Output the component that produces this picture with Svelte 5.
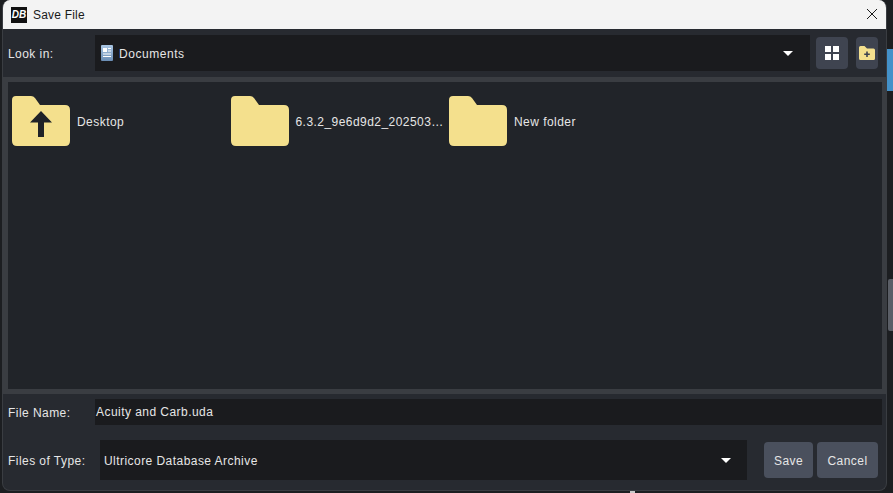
<script>
  const folders = [
    { name: 'Desktop', up: true },
    { name: '6.3.2_9e6d9d2_202503…', up: false },
    { name: 'New folder', up: false }
  ];
  const folderPath = 'M4 0H19Q21.5 0 23 2L28 9H53Q58 9 58 14V45Q58 50 53 50H5Q0 50 0 45V4Q0 0 4 0Z';
</script>

<div class="page">
  <!-- bits of the app behind the dialog -->
  <div class="bg-blue"></div>
  <div class="bg-scroll"></div>
  <div class="bg-tick"></div>

  <div class="window">
    <div class="titlebar">
      <div class="logo">DB</div>
      <span class="title">Save File</span>
      <svg class="close" width="12" height="12" viewBox="0 0 12 12">
        <path d="M1 1L11 11M11 1L1 11" stroke="#1a1a1a" stroke-width="1" fill="none" />
      </svg>
    </div>

    <div class="body">
      <div class="look-row">
        <label class="lbl look-lbl" for="look">Look in:</label>
        <div class="combo look-combo" id="look">
          <svg class="doc" width="12" height="16" viewBox="0 0 12 16">
            <defs>
              <linearGradient id="docfill" x1="0" y1="0" x2="0" y2="1">
                <stop offset="0" stop-color="#a9c6e4" />
                <stop offset="1" stop-color="#6a8db4" />
              </linearGradient>
            </defs>
            <rect width="12" height="16" rx="1" fill="url(#docfill)" />
            <rect x="2" y="3" width="4" height="4" fill="#fff" />
            <path d="M7 3.5H10M7 6H10M2 9H10M2 11.5H10" stroke="#fff" stroke-width="1" />
          </svg>
          <span>Documents</span>
          <div class="arrow"></div>
        </div>
        <button class="tool grid-btn" aria-label="View">
          <svg width="14" height="14" viewBox="0 0 14 14" fill="#fff">
            <rect x="0" y="0" width="6" height="6" />
            <rect x="8" y="0" width="6" height="6" />
            <rect x="0" y="8" width="6" height="6" />
            <rect x="8" y="8" width="6" height="6" />
          </svg>
        </button>
        <button class="tool new-btn" aria-label="New folder">
          <svg width="16" height="14" viewBox="0 0 16 14">
            <path d="M1.5 0H5.5L8 2.5H14.5Q16 2.5 16 4V12.5Q16 14 14.5 14H1.5Q0 14 0 12.5V1.5Q0 0 1.5 0Z" fill="#f4e08d" />
            <path d="M8 5.5V11M5.2 8.2H10.8" stroke="#3c4250" stroke-width="1.6" />
          </svg>
        </button>
      </div>

      <div class="list">
        {#each folders as f}
          <div class="item">
            <svg width="58" height="50" viewBox="0 0 58 50">
              <path d={folderPath} fill="#f4e08d" />
              {#if f.up}
                <path d="M29 15L40 26.5H32V41H26V26.5H18Z" fill="#1f2227" />
              {/if}
            </svg>
            <span class="item-name">{f.name}</span>
          </div>
        {/each}
      </div>

      <div class="name-row">
        <label class="lbl name-lbl" for="fname">File Name:</label>
        <div class="name-input" id="fname">Acuity and Carb.uda</div>
      </div>

      <div class="type-row">
        <label class="lbl type-lbl" for="ftype">Files of Type:</label>
        <div class="combo type-combo" id="ftype">
          <span>Ultricore Database Archive</span>
          <div class="arrow"></div>
        </div>
        <button class="btn save">Save</button>
        <button class="btn cancel">Cancel</button>
      </div>
    </div>
  </div>
</div>

<style>
  :global(body) {
    margin: 0;
    background: #1c1e21;
  }

  .page {
    position: relative;
    width: 893px;
    height: 493px;
    overflow: hidden;
    padding-left: 2px;
    box-sizing: border-box;
    font-family: "Liberation Sans", Arial, sans-serif;
    font-size: 12px;
    letter-spacing: 0.45px;
    color: #e6e6e6;
  }

  .bg-blue {
    position: absolute;
    left: 887px;
    top: 49px;
    width: 6px;
    height: 42px;
    background: #4391c9;
  }

  .bg-scroll {
    position: absolute;
    left: 888px;
    top: 279px;
    width: 5px;
    height: 52px;
    background: #5a5e66;
    border-radius: 2px 0 0 2px;
  }

  .bg-tick {
    position: absolute;
    left: 630px;
    top: 490px;
    width: 5px;
    height: 3px;
    background: #c8c8c8;
  }

  .window {
    position: relative;
    width: 885px;
    height: 491px;
    background: #272a30;
    border-radius: 8px;
    border: 1px solid #3a3d42;
    border-top: none;
    box-sizing: border-box;
    overflow: hidden;
    display: flex;
    flex-direction: column;
  }

  .titlebar {
    height: 29px;
    flex: none;
    background: #f3f3f3;
    display: flex;
    align-items: center;
    padding-left: 8px;
    color: #1a1a1a;
    letter-spacing: 0.2px;
  }

  .logo {
    width: 16px;
    height: 16px;
    background: #111;
    color: #fff;
    font-size: 10px;
    font-weight: bold;
    font-style: italic;
    letter-spacing: 0;
    text-align: center;
    line-height: 15px;
    margin-right: 6px;
  }

  .close {
    margin-left: auto;
    margin-right: 8px;
    margin-bottom: 2px;
  }

  .body {
    flex: 1;
    display: flex;
    flex-direction: column;
  }

  .lbl {
    color: #e6e6e6;
    flex: none;
    padding-top: 1px;
  }

  .look-row {
    height: 48px;
    flex: none;
    display: flex;
    align-items: center;
  }

  .look-lbl {
    width: 87px;
    padding-left: 5px;
    box-sizing: border-box;
  }

  .combo {
    background: #1a1b1e;
    display: flex;
    align-items: center;
    box-sizing: border-box;
  }

  .combo span {
    padding-top: 1px;
  }

  .look-combo {
    width: 715px;
    height: 36px;
    padding: 0 17px 0 6px;
    margin-left: 5px;
    letter-spacing: 0.55px;
  }

  .doc {
    margin-right: 6px;
  }

  .arrow {
    margin-left: auto;
    width: 0;
    height: 0;
    border-left: 5px solid transparent;
    border-right: 5px solid transparent;
    border-top: 5px solid #fff;
  }

  .tool {
    height: 32px;
    padding: 0;
    border: none;
    background: #3f4450;
    border-radius: 4px;
    display: flex;
    align-items: center;
    justify-content: center;
  }

  .grid-btn {
    width: 32px;
    margin-left: 6px;
  }

  .new-btn {
    width: 22px;
    margin-left: 8px;
  }

  .list {
    flex: none;
    height: 307px;
    width: 874px;
    box-sizing: content-box;
    background: #212429;
    border-style: solid;
    border-color: #3a3d42;
    border-width: 5px 4px 5px 5px;
    display: flex;
    align-items: flex-start;
  }

  .item {
    width: 218.5px;
    flex: none;
    display: flex;
    align-items: center;
    padding: 14px 0 0 4px;
    box-sizing: border-box;
  }

  .item-name {
    margin-left: 7px;
    padding-top: 1px;
  }

  .name-row {
    display: flex;
    align-items: center;
    height: 26px;
    margin-top: 5px;
    flex: none;
  }

  .name-lbl {
    width: 92px;
    padding-left: 5px;
    box-sizing: border-box;
  }

  .name-input {
    width: 787px;
    height: 26px;
    line-height: 27px;
    background: #1a1b1e;
    padding-left: 1px;
    box-sizing: border-box;
  }

  .type-row {
    display: flex;
    align-items: center;
    height: 40px;
    margin-top: 15px;
    flex: none;
  }

  .type-lbl {
    width: 97px;
    padding-left: 5px;
    box-sizing: border-box;
  }

  .type-combo {
    width: 647px;
    height: 40px;
    padding: 0 16px 0 4px;
  }

  .btn {
    height: 36px;
    border: none;
    border-radius: 4px;
    background: #4a505d;
    color: #e6e6e6;
    font: inherit;
    letter-spacing: inherit;
    padding: 1px 0 0;
  }

  .save {
    width: 49px;
    margin-left: 17px;
  }

  .cancel {
    width: 61px;
    margin-left: 4px;
  }
</style>
